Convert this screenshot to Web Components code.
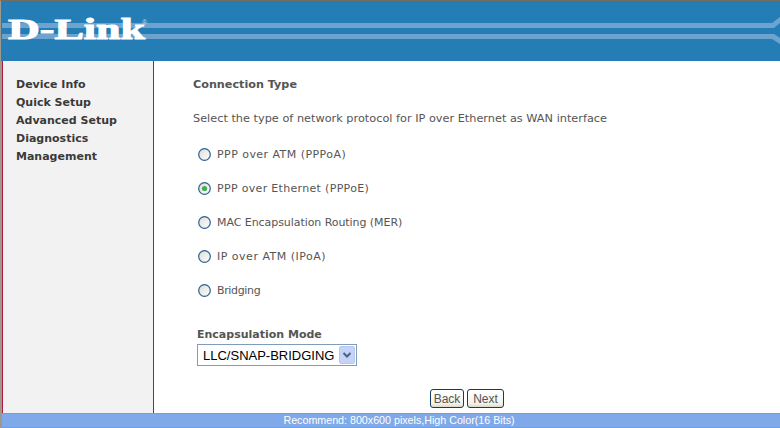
<!DOCTYPE html>
<html>
<head>
<meta charset="utf-8">
<title>D-Link</title>
<style>
    html, body { margin: 0; height: 100%; background: #fff; overflow: hidden; }
    body { font: 11px "DejaVu Sans", sans-serif; color: #555; }
    modem-page { height: 428px; }
</style>
</head>
<body>
<modem-page>
    <modem-banner slot="banner"></modem-banner>
    <side-menu slot="menu">
        <span>Device Info</span>
        <span>Quick Setup</span>
        <span>Advanced Setup</span>
        <span>Diagnostics</span>
        <span>Management</span>
    </side-menu>
    <connection-form></connection-form>
    <status-bar slot="status">Recommend: 800x600 pixels,High Color(16 Bits)</status-bar>
</modem-page>

<script>
customElements.define(
    'modem-page',
    class extends HTMLElement {
        constructor() {
            super()
            this.attachShadow({ mode: 'open' })
            this.shadowRoot.innerHTML = `
                <style>
                    :host {
                        display: grid;
                        grid-template-columns: 153px 1fr;
                        grid-template-rows: 60px 1fr 15px;
                        box-sizing: border-box;
                        border-top: 1px solid #716f64;
                        border-left: 1px solid #9c9a8e;
                    }
                    .banner, .status { grid-column: 1 / 3; }
                    .menu {
                        border-left: 1px solid #9c9a8e;
                        border-right: 1px solid #a31c3e;
                        box-shadow: inset 1px 0 0 #b5193a;
                        background: #f2f2f2;
                        min-height: 0;
                    }
                </style>
                <div class="banner"><slot name="banner"></slot></div>
                <div class="menu"><slot name="menu"></slot></div>
                <main><slot></slot></main>
                <div class="status"><slot name="status"></slot></div>
            `
        }
    }
)

customElements.define(
    'modem-banner',
    class extends HTMLElement {
        constructor() {
            super()
            this.attachShadow({ mode: 'open' })
            this.shadowRoot.innerHTML = `
                <style>
                    :host {
                        display: block;
                        height: 60px;
                        background: #247db5;
                        overflow: hidden;
                    }
                    svg { display: block; }
                    text {
                        font: bold 30px "Liberation Serif", serif;
                        fill: #fff;
                        stroke: #fff;
                        stroke-width: 1px;
                    }
                </style>
                <svg width="779" height="60" viewBox="1 0 779 60">
                    <path fill="#6fa3cf" d="M2 22H772L780 16V22L774 27H2ZM2 33H774L780 37V43L772 38H2Z"/>
                    <text x="8" y="38" textLength="137" lengthAdjust="spacingAndGlyphs">D-Link</text>
                    <text x="142" y="24" style="font:7px 'Liberation Sans',sans-serif;stroke:none;fill:#c8dcec">®</text>
                </svg>
            `
        }
    }
)

customElements.define(
    'side-menu',
    class extends HTMLElement {
        constructor() {
            super()
            this.attachShadow({ mode: 'open' })
            this.shadowRoot.innerHTML = `
                <style>
                    :host {
                        display: flex;
                        flex-direction: column;
                        padding: 15px 0 0 14px;
                        font: bold 11px/18px "DejaVu Sans", sans-serif;
                        color: #3a3a3a;
                    }
                    ::slotted(span) { display: block; }
                </style>
                <slot></slot>
            `
        }
    }
)

customElements.define(
    'radio-row',
    class extends HTMLElement {
        constructor() {
            super()
            this.attachShadow({ mode: 'open' })
            const dot = this.hasAttribute('checked')
                ? '<circle cx="6.5" cy="6.5" r="2.6" fill="#3fb24f"/>'
                : ''
            this.shadowRoot.innerHTML = `
                <style>
                    :host {
                        display: flex;
                        align-items: center;
                        gap: 6px;
                        height: 34px;
                        padding-left: 5px;
                    }
                    svg { display: block; flex: none; }
                </style>
                <svg width="13" height="13" viewBox="0 0 13 13">
                    <defs>
                        <linearGradient id="f" x1="0" y1="0" x2="1" y2="1">
                            <stop offset="0" stop-color="#dcdcd6"/>
                            <stop offset="1" stop-color="#ffffff"/>
                        </linearGradient>
                    </defs>
                    <circle cx="6.5" cy="6.5" r="5.8" fill="url(#f)" stroke="#2f5f8f" stroke-width="1.2"/>
                    ${dot}
                </svg>
                <span><slot></slot></span>
            `
        }
    }
)

customElements.define(
    'xp-select',
    class extends HTMLElement {
        constructor() {
            super()
            this.attachShadow({ mode: 'open' })
            this.shadowRoot.innerHTML = `
                <style>
                    :host {
                        display: inline-flex;
                        align-items: center;
                        box-sizing: border-box;
                        width: 160px;
                        height: 22px;
                        padding: 0 1px 0 5px;
                        border: 1px solid #7f9db9;
                        background: #fff;
                        font: 13px "Liberation Sans", sans-serif;
                        color: #000;
                    }
                    span { flex: 1; white-space: nowrap; }
                    svg { display: block; flex: none; }
                </style>
                <span><slot></slot></span>
                <svg width="16" height="18" viewBox="0 0 16 18">
                    <rect x=".5" y=".5" width="15" height="17" rx="1.5" fill="#c5d3f7" stroke="#b5c8f4"/>
                    <path d="M4.5 7 8 10.5 11.5 7" fill="none" stroke="#4d6185" stroke-width="2"/>
                </svg>
            `
        }
    }
)

customElements.define(
    'xp-button',
    class extends HTMLElement {
        constructor() {
            super()
            this.attachShadow({ mode: 'open' })
            this.shadowRoot.innerHTML = `
                <style>
                    :host {
                        display: inline-flex;
                        align-items: center;
                        justify-content: center;
                        box-sizing: border-box;
                        height: 19px;
                        border: 1px solid #0f3d68;
                        border-radius: 3px;
                        background: linear-gradient(#fff, #f3f2ea 80%, #dcd8ca);
                        font: 12px "Liberation Sans", sans-serif;
                        color: #555;
                    }
                </style>
                <slot></slot>
            `
        }
    }
)

customElements.define(
    'connection-form',
    class extends HTMLElement {
        constructor() {
            super()
            this.attachShadow({ mode: 'open' })
            this.shadowRoot.innerHTML = `
                <style>
                    :host {
                        display: flex;
                        flex-direction: column;
                        height: 100%;
                        padding: 15px 0 0 39px;
                        box-sizing: border-box;
                    }
                    h1 { margin: 0 0 17px; font: bold 11.2px/18px "DejaVu Sans", sans-serif; }
                    p { margin: 0 0 11px; font-size: 11.3px; line-height: 15px; }
                    .mode { margin: 21px 0 0 4px; }
                    .mode b { display: block; line-height: 14px; margin-bottom: 2px; }
                    .buttons {
                        display: flex;
                        justify-content: center;
                        gap: 3px;
                        margin: 23px 0 0 -39px;
                    }
                </style>
                <h1>Connection Type</h1>
                <p>Select the type of network protocol for IP over Ethernet as WAN interface</p>
                <radio-row style="letter-spacing:.45px">PPP over ATM (PPPoA)</radio-row>
                <radio-row style="letter-spacing:.32px" checked>PPP over Ethernet (PPPoE)</radio-row>
                <radio-row style="letter-spacing:-.06px">MAC Encapsulation Routing (MER)</radio-row>
                <radio-row style="letter-spacing:.5px">IP over ATM (IPoA)</radio-row>
                <radio-row style="letter-spacing:-.35px">Bridging</radio-row>
                <div class="mode">
                    <b>Encapsulation Mode</b>
                    <xp-select>LLC/SNAP-BRIDGING</xp-select>
                </div>
                <div class="buttons">
                    <xp-button style="width:34px">Back</xp-button>
                    <xp-button style="width:37px">Next</xp-button>
                </div>
            `
        }
    }
)

customElements.define(
    'status-bar',
    class extends HTMLElement {
        constructor() {
            super()
            this.attachShadow({ mode: 'open' })
            this.shadowRoot.innerHTML = `
                <style>
                    :host {
                        display: block;
                        height: 15px;
                        box-sizing: border-box;
                        padding-left: 16px;
                        border-top: 1px solid #5fa4ee;
                        border-bottom: 1px solid #5fa4ee;
                        border-left: 1px solid #9c9a8e;
                        background: #7fa9e8;
                        color: #fff;
                        font: 10.7px/13px "Liberation Sans", sans-serif;
                        text-align: center;
                        overflow: hidden;
                    }
                </style>
                <slot></slot>
            `
        }
    }
)
</script>
</body>
</html>
